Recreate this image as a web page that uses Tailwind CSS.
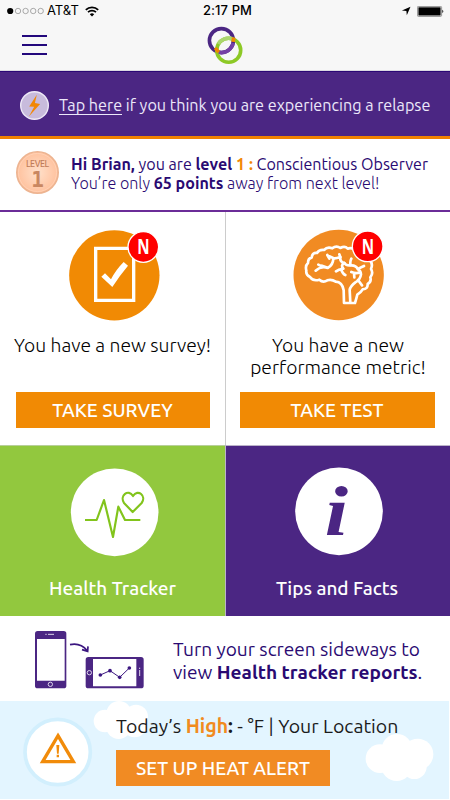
<!DOCTYPE html>
<html lang="en">
<head>
  <meta charset="UTF-8" />
  <meta name="viewport" content="width=device-width,initial-scale=1.0" />
  <title>Home</title>
  <script src="https://cdn.jsdelivr.net/npm/@tailwindcss/browser@4"></script>
</head>
<body class="bg-white w-[450px] h-[800px] overflow-hidden font-['Ubuntu','Noto_Sans',sans-serif] text-[#2a0a72] whitespace-nowrap">
  <header class="h-[71px] bg-[#f7f7f7] border-b border-[#d9d9e0]">
    <!-- status bar -->
    <div class="h-[22px] pl-[7px] pr-[6px] grid grid-cols-3 items-center text-black font-['Inter',sans-serif] text-[13px]">
      <div class="flex items-center">
        <svg class="w-[37px] h-[8px]" viewBox="0 0 37 8" fill="none" stroke="#888" stroke-width=".7">
          <circle cx="3.2" cy="4" r="3.1" fill="#000" stroke="none" />
          <circle cx="11" cy="4" r="2.7" /><circle cx="18.6" cy="4" r="2.7" /><circle cx="26.2" cy="4" r="2.7" /><circle cx="33.7" cy="4" r="2.7" />
        </svg>
        <span class="ml-[3px] tracking-[0px]">AT&amp;T</span>
        <svg class="ml-[6px] w-[14px] h-[11px]" viewBox="0 0 14 11" fill="none" stroke="#000" stroke-width="1.7">
          <path d="M.8 3.9a8.8 8.8 0 0 1 12.4 0" /><path d="M3 6.2a5.7 5.7 0 0 1 8 0" />
          <path d="M7 10.5 4.8 8.2a3.2 3.2 0 0 1 4.4 0z" fill="#000" stroke="none" />
        </svg>
      </div>
      <div class="text-center font-medium tracking-[0.1px] pl-1">2:17 PM</div>
      <div class="flex items-center justify-end gap-[6px]">
        <svg class="w-[10px] h-[10px]" viewBox="0 0 10 10"><path d="M9.5.7 5.8 9.3 5.4 5.1.9 4.6z" /></svg>
        <svg class="w-[27px] h-[11px]" viewBox="0 0 27 11">
          <rect x=".4" y=".4" width="24.2" height="10" rx="1" fill="#fff" stroke="#777" stroke-width=".8" />
          <rect x="1.4" y="1.3" width="22.2" height="8.2" /><path d="M25.4 3.8q1.8 1.6 0 3.2z" />
        </svg>
      </div>
    </div>
    <div class="h-[48px] flex items-start">
      <svg class="ml-[22px] mt-[12px] w-[25px] h-[22px]" viewBox="0 0 25 22" fill="#23087c">
        <path d="M0 1h25v2H0zM0 10h25v2H0zM0 19h25v2H0z" />
      </svg>
      <svg class="ml-[159px] mt-[3px] w-[38px] h-[40px]" viewBox="0 0 38 40" fill="none" stroke-width="3.6">
        <circle cx="15.4" cy="15.6" r="12" stroke="#4b2683" />
        <circle cx="22.7" cy="25.2" r="12" stroke="#8dc926" />
        <path d="M12.2 18.9A12 12 0 0 1 26.3 13.8" stroke="#abd66e" />
        <path d="M12.8 27.3A12 12 0 0 0 27.2 18" stroke="#7540a5" />
        <path d="M9.3 23 12.6 27.2M27.6 12.5 27.2 16.8" stroke="#f28600" />
      </svg>
    </div>
  </header>

  <!-- relapse banner -->
  <section class="h-[68px] bg-[#4b2683] border-t border-[#2b0875] border-b-[3px] border-b-[#f08200] flex items-center text-[#ece8fa]">
    <svg class="ml-[20px] mt-[3px] w-[29px] h-[29px]" viewBox="0 0 29 29">
      <circle cx="14.5" cy="14.5" r="13.8" fill="#c8bbdc" stroke="#eee9f7" stroke-width="1.4" />
      <path d="M16.8 3.8 9.2 15.4l5 .4-5.3 9.7L20.1 13l-5.2-.9z" fill="#f28705" />
    </svg>
    <p class="ml-[10px] mt-[2px] text-[16.2px] leading-6"><span class="border-b border-[#ece8fa] inline-block leading-[17px]">Tap here</span> if you think you are experiencing a relapse</p>
  </section>

  <!-- level -->
  <section class="h-[73px] border-b-2 border-[#6b2c98] flex items-start">
    <svg class="ml-[16px] mt-[12px] w-[43px] h-[43px]" viewBox="0 0 43 43">
      <defs><radialGradient id="coin"><stop offset="0" stop-color="#ffe0ca" /><stop offset="1" stop-color="#ffc19d" /></radialGradient></defs>
      <circle cx="21.5" cy="21.5" r="20.7" fill="url(#coin)" stroke="#edb491" stroke-width="1.6" />
      <circle cx="21.5" cy="21.5" r="19" fill="none" stroke="#ffd1b4" />
      <text x="10" y="16" font-size="8.6" font-weight="500" textLength="23" fill="#bf7c58" font-family="Ubuntu, Noto Sans, sans-serif">LEVEL</text>
      <text x="21.7" y="35.7" font-size="21" font-weight="700" text-anchor="middle" fill="#c98761" font-family="DejaVu Sans Mono, monospace">1</text>
    </svg>
    <div class="ml-[12px] mt-[16px] text-[16.1px] leading-[19px]">
      <p><b>Hi Brian,</b> you are <b>level <span class="text-[#f28705]">1 :</span></b> Conscientious Observer</p>
      <p class="font-light">You’re only <b class="font-bold">65 points</b> away from next level!</p>
    </div>
  </section>

  <!-- survey / metric -->
  <section class="grid grid-cols-2 h-[233px] text-black text-[19.3px] leading-[22px] text-center">
    <div class="flex flex-col items-center pt-[13px]">
      <svg class="w-[100px] h-[100px] shrink-0" viewBox="187 45 300 300">
        <circle cx="341" cy="196" r="135.5" fill="#f18a04" />
        <path d="M285 115H399V271H285z" fill="none" stroke="#fff" stroke-width="10" />
        <path d="M302 200 313 190 331 208Q345 180 369 156L382 167Q356 198 335 231z" fill="#fff" />
        <circle cx="428" cy="111" r="46" fill="#f00" stroke="#fff" stroke-width="4" />
        <text x="410" y="133" font-size="66" font-weight="700" textLength="37" lengthAdjust="spacingAndGlyphs" fill="#fff" font-family="Noto Sans, sans-serif">N</text>
      </svg>
      <p class="mt-[9px] h-[58px] font-light">You have a new survey!</p>
      <button class="w-[194px] h-[36px] bg-[#f18a04] text-white font-medium text-[19px]">TAKE SURVEY</button>
    </div>
    <div class="flex flex-col items-center pt-[13px] border-l border-[#ccc]">
      <svg class="w-[100px] h-[100px] shrink-0" viewBox="-6 0 300 300">
        <circle cx="146" cy="150" r="135.5" fill="#f18b23" />
        <g fill="none" stroke="#fff" stroke-width="8" stroke-linecap="round" stroke-linejoin="round">
          <path d="M192 73Q182 67 173 71Q165 62 151 69Q139 60 127 70Q112 64 102 75Q88 73 81 84Q67 82 65 98Q54 100 54 114Q45 122 49 137Q47 150 60 156Q70 170 88 164Q99 174 112 166Q125 162 137 170Q157 171 161 196L162 234H195Q199 221 202 209Q213 202 218 193Q234 192 233 177Q245 170 241 157Q251 144 243 132Q250 116 239 105" />
          <path d="M181 233 179 195Q181 183 196 172Q211 164 213 148Q212 137 203 132Q198 120 182 121Q169 123 163 114Q149 111 151 96Q138 101 131 100L118 94" />
          <path d="M151 96 148 88M130 101Q129 121 113 129Q93 122 77 137M99 126 85 119M113 128 96 122M118 101 112 90M182 120Q179 111 184 101M163 114Q151 121 160 131Q145 134 138 139M153 132Q158 147 166 150M205 131 222 123M209 143Q196 146 184 141M192 144 193 157M204 165 216 181" />
        </g>
        <circle cx="233" cy="64" r="46" fill="#f00" stroke="#fff" stroke-width="4" />
        <text x="215" y="86" font-size="66" font-weight="700" textLength="37" lengthAdjust="spacingAndGlyphs" fill="#fff" font-family="Noto Sans, sans-serif">N</text>
      </svg>
      <p class="mt-[9px] h-[58px] font-light">You have a new<br>performance metric!</p>
      <button class="-ml-[2px] w-[195px] h-[36px] bg-[#f18a04] text-white font-medium text-[19px]">TAKE TEST</button>
    </div>
  </section>

  <!-- tiles -->
  <section class="grid grid-cols-2 h-[171px] text-white text-[19px] leading-[22px] font-medium text-center">
    <div class="bg-[#92c83e] flex flex-col items-center pt-[16px] border-t border-[#b8cf9a]">
      <svg class="w-[100px] h-[100px] shrink-0" viewBox="187 63 300 300">
        <circle cx="342" cy="214" r="131.5" fill="#fff" />
        <g fill="none" stroke="#82c41c" stroke-width="6.5" stroke-linejoin="round">
          <path d="M253 237H288L310 177 337 288 353 197 373 237H419" />
          <path d="M396 213 370 186C356 164 383 142 397 165C412 142 438 165 423 186z" />
        </g>
      </svg>
      <p class="mt-[15px]">Health Tracker</p>
    </div>
    <div class="bg-[#4b2683] flex flex-col items-center pt-[16px] border-l border-t border-[#bbb3c9]">
      <svg class="w-[100px] h-[100px] shrink-0" viewBox="189 63 300 300">
        <circle cx="342" cy="211" r="131.5" fill="#fff" />
        <text x="299" y="281" font-size="212" font-weight="700" font-style="italic" textLength="70" lengthAdjust="spacingAndGlyphs" fill="#4b2683" font-family="Liberation Serif, serif">i</text>
      </svg>
      <p class="mt-[15px] -ml-[2px]">Tips and Facts</p>
    </div>
  </section>

  <!-- rotate hint -->
  <section class="h-[85px] flex items-start">
    <svg class="ml-[34px] mt-[14px] w-[111px] h-[60px]" viewBox="102 60 333 180">
      <rect x="105" y="63" width="94" height="172" rx="8" fill="#4b2683" />
      <path d="M111 87H194V212H111z" fill="#fff" />
      <path d="M136 73H140M144 73H162" stroke="#ddd5ea" stroke-width="3" />
      <circle cx="151" cy="223" r="6.5" fill="none" stroke="#ddd5ea" stroke-width="3" />
      <path d="M210 104Q241 97 262 122M264 109 263 124 246 119" fill="none" stroke="#3b1680" stroke-width="5" />
      <rect x="257" y="141" width="174" height="94" rx="8" fill="#4b2683" />
      <path d="M279 147H409V229H279z" fill="#fff" />
      <circle cx="268" cy="188" r="6.5" fill="none" stroke="#ddd5ea" stroke-width="3" />
      <path d="M419 173V177M419 180V198" stroke="#ddd5ea" stroke-width="3" />
      <path d="M301 195 330 182 359 202 388 174" fill="none" stroke="#3b1680" stroke-width="3" />
      <g fill="#3b1680"><circle cx="301" cy="195" r="5.5" /><circle cx="330" cy="182" r="5.5" /><circle cx="359" cy="202" r="5.5" /><circle cx="388" cy="174" r="5.5" /></g>
    </svg>
    <p class="ml-[28px] mt-[22px] text-[19.1px] leading-[22.5px]">Turn your screen sideways to<br>view <b>Health tracker reports</b>.</p>
  </section>

  <!-- heat alert -->
  <section class="relative h-[98px] w-[449px] bg-[#e3f5ff] flex items-start">
    <svg class="absolute left-[93px] top-0 w-[56px] h-[39px]" viewBox="279 273 168 117" fill="#fff">
      <circle cx="315" cy="333" r="34" /><circle cx="357" cy="311" r="38" /><circle cx="408" cy="320" r="36" /><circle cx="356" cy="349" r="38" /><circle cx="404" cy="346" r="36" />
    </svg>
    <svg class="absolute left-[365px] top-[32px] w-[70px] h-[50px]" viewBox="420 369 210 150" fill="#fff">
      <circle cx="465" cy="446" r="43" /><circle cx="516" cy="418" r="46" /><circle cx="578" cy="433" r="47" /><circle cx="515" cy="467" r="46" /><circle cx="568" cy="470" r="37" />
    </svg>
    <svg class="ml-[23px] mt-[16px] w-[70px] h-[70px]" viewBox="69 321 210 210">
      <circle cx="173" cy="426" r="98" fill="#fff" stroke="#d2effd" stroke-width="11" />
      <path d="M174 377 220 455H128z" fill="#fff" stroke="#f18b0a" stroke-width="10" />
      <path d="M169 405H178L176 431H171zM170 434H177V442H170z" fill="#f18b0a" />
    </svg>
    <div class="relative ml-[23px] mt-[13px] text-[#1b1b1b]">
      <p class="text-[19.5px] leading-[24px]">Today’s <b class="text-[#f18b1e]">High</b><b>:</b> - °F | Your Location</p>
      <button class="mt-[12px] w-[214px] h-[36px] bg-[#f18b23] text-white font-medium text-[19px] block">SET UP HEAT ALERT</button>
    </div>
  </section>
</body>
</html>
